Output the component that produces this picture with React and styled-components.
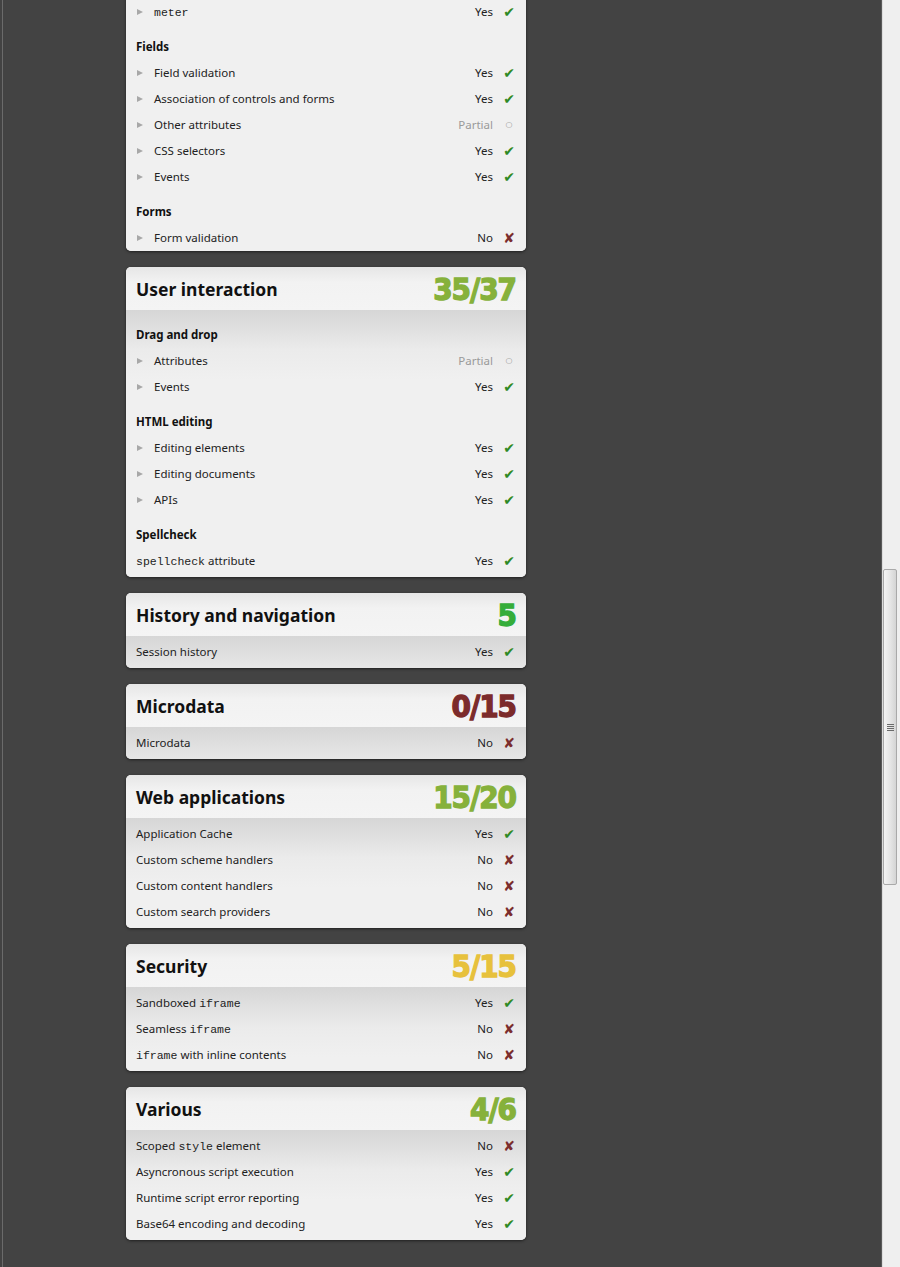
import React from 'react';
import styled, { createGlobalStyle } from 'styled-components';

const GlobalStyle = createGlobalStyle`
  html, body {
    margin: 0;
    padding: 0;
    height: 100%;
    overflow: hidden;
    background: #434343;
  }
  body {
    font-family: 'Noto Sans', 'Open Sans', Arial, sans-serif;
  }
`;

const Page = styled.div`
  display: flex;
  height: 100vh;
`;

const Main = styled.div`
  flex: 1;
  margin-left: 2px;
  border-left: 1px solid #6b6b6b;
  border-right: 1px solid #5a5a5a;
  padding-left: 123px;
  display: flex;
  flex-direction: column;
  gap: 16px;
  overflow: hidden;
`;

const ScrollTrack = styled.div`
  width: 18px;
  background: #efefef;
  border-left: 1px solid #dcdcdc;
  box-sizing: border-box;
  display: flex;
  flex-direction: column;
  padding-top: 569px;
`;

const ScrollThumb = styled.div`
  width: 14px;
  height: 316px;
  box-sizing: border-box;
  border: 1px solid #a9a9a9;
  border-radius: 2px;
  background: linear-gradient(to right, #f4f4f4, #e6e6e6 50%, #d4d4d4);
  display: flex;
  align-items: center;
  justify-content: center;
`;

const Grip = styled.div`
  width: 7px;
  height: 7px;
  background: repeating-linear-gradient(to bottom, #6a6a6a 0 1px, transparent 1px 2px);
`;

const Card = styled.section`
  width: 400px;
  background: #f0f0f0;
  border-radius: ${p => (p.$cut ? '0 0 5px 5px' : '5px')};
  box-shadow: 0 1px 3px rgba(0, 0, 0, 0.55);
  overflow: hidden;
  margin-top: ${p => (p.$cut ? '-4px' : '0')};
`;

const Header = styled.header`
  height: 43px;
  padding: 0 10px;
  display: flex;
  align-items: center;
  justify-content: space-between;
  background: linear-gradient(to bottom, #e6e6e6, #f2f2f2 35%, #f4f4f4);
`;

const Title = styled.h2`
  margin: 0;
  font-family: 'Noto Sans', 'Open Sans', sans-serif;
  font-weight: bold;
  font-size: 17.5px;
  color: #111;
`;

const Score = styled.div`
  font-family: 'DejaVu Sans Condensed', 'DejaVu Sans', sans-serif;
  font-weight: bold;
  font-size: 31px;
  letter-spacing: -1px;
  line-height: 1;
  color: ${p => p.$color};
  -webkit-text-stroke: 1.3px ${p => p.$color};
  padding-top: 2px;
`;

const Body = styled.div`
  padding: 3px 0 ${p => (p.$tight ? '0' : '3px')};
  background: ${p =>
    p.$cut ? '#f0f0f0' : 'linear-gradient(to bottom, #d6d6d6, #ebebeb 40px, #f0f0f0 70px)'};
`;

const GroupTitle = styled.h3`
  margin: 0;
  height: 35px;
  box-sizing: border-box;
  padding: 14px 10px 5px;
  font-size: 11.5px;
  line-height: 16px;
  font-weight: bold;
  color: #111;
`;

const Row = styled.div`
  height: 26px;
  box-sizing: border-box;
  padding: 0 10px 1px;
  display: flex;
  align-items: center;
  font-size: 11.5px;
  color: #222;
  ${p =>
    p.$more &&
    `
    &::before {
      content: '';
      width: 0;
      height: 0;
      border-left: 6px solid #a8a8a8;
      border-top: 3.5px solid transparent;
      border-bottom: 3.5px solid transparent;
      margin: 0 11px 0 1px;
    }
  `}
`;

const Code = styled.code`
  font-family: 'Liberation Mono', 'DejaVu Sans Mono', monospace;
  font-size: 11.5px;
`;

const Status = styled.span`
  margin-left: auto;
  color: ${p => (p.$kind === 'partial' ? '#9a9a9a' : '#222')};
`;

const Mark = styled.span`
  width: 14px;
  margin-left: 9px;
  text-align: center;
  font-family: 'DejaVu Sans', sans-serif;
  font-size: ${p => (p.$kind === 'partial' ? '8px' : '14px')};
  color: ${p =>
    p.$kind === 'yes' ? '#2f8a25' : p.$kind === 'no' ? '#7b2d2d' : '#9a9a9a'};
`;

const STATUS = {
  yes: { label: 'Yes', mark: '\u2714' },
  no: { label: 'No', mark: '\u2718' },
  partial: { label: 'Partial', mark: '\u25CB' },
};

const renderLabel = label =>
  Array.isArray(label)
    ? label.map((part, i) => (i % 2 ? <Code key={i}>{part}</Code> : <span key={i}>{part}</span>))
    : label;

const Item = ({ label, kind, more }) => (
  <Row $more={more}>
    <span>{renderLabel(label)}</span>
    <Status $kind={kind}>{STATUS[kind].label}</Status>
    <Mark $kind={kind}>{STATUS[kind].mark}</Mark>
  </Row>
);

const sections = [
  {
    title: 'User interaction',
    score: '35/37',
    color: '#86b13b',
    groups: [
      {
        name: 'Drag and drop',
        items: [
          { label: 'Attributes', kind: 'partial', more: true },
          { label: 'Events', kind: 'yes', more: true },
        ],
      },
      {
        name: 'HTML editing',
        items: [
          { label: 'Editing elements', kind: 'yes', more: true },
          { label: 'Editing documents', kind: 'yes', more: true },
          { label: 'APIs', kind: 'yes', more: true },
        ],
      },
      {
        name: 'Spellcheck',
        items: [{ label: ['', 'spellcheck', ' attribute'], kind: 'yes' }],
      },
    ],
  },
  {
    title: 'History and navigation',
    score: '5',
    color: '#35ad3a',
    items: [{ label: 'Session history', kind: 'yes' }],
  },
  {
    title: 'Microdata',
    score: '0/15',
    color: '#7c2b2b',
    items: [{ label: 'Microdata', kind: 'no' }],
  },
  {
    title: 'Web applications',
    score: '15/20',
    color: '#86b13b',
    items: [
      { label: 'Application Cache', kind: 'yes' },
      { label: 'Custom scheme handlers', kind: 'no' },
      { label: 'Custom content handlers', kind: 'no' },
      { label: 'Custom search providers', kind: 'no' },
    ],
  },
  {
    title: 'Security',
    score: '5/15',
    color: '#e7c13c',
    items: [
      { label: ['Sandboxed ', 'iframe'], kind: 'yes' },
      { label: ['Seamless ', 'iframe'], kind: 'no' },
      { label: ['', 'iframe', ' with inline contents'], kind: 'no' },
    ],
  },
  {
    title: 'Various',
    score: '4/6',
    color: '#86b13b',
    items: [
      { label: ['Scoped ', 'style', ' element'], kind: 'no' },
      { label: 'Asyncronous script execution', kind: 'yes' },
      { label: 'Runtime script error reporting', kind: 'yes' },
      { label: 'Base64 encoding and decoding', kind: 'yes' },
    ],
  },
];

const BodyContent = ({ section }) => (
  <>
    {section.items && section.items.map((it, i) => <Item key={i} {...it} />)}
    {section.groups &&
      section.groups.map(g => (
        <React.Fragment key={g.name}>
          <GroupTitle>{g.name}</GroupTitle>
          {g.items.map((it, i) => (
            <Item key={i} {...it} />
          ))}
        </React.Fragment>
      ))}
  </>
);

export default function App() {
  return (
    <Page>
      <GlobalStyle />
      <Main>
        <Card $cut>
          <Body $cut $tight>
            <Item label={['', 'meter']} kind="yes" more />
            <GroupTitle>Fields</GroupTitle>
            <Item label="Field validation" kind="yes" more />
            <Item label="Association of controls and forms" kind="yes" more />
            <Item label="Other attributes" kind="partial" more />
            <Item label="CSS selectors" kind="yes" more />
            <Item label="Events" kind="yes" more />
            <GroupTitle>Forms</GroupTitle>
            <Item label="Form validation" kind="no" more />
          </Body>
        </Card>
        {sections.map(s => (
          <Card key={s.title}>
            <Header>
              <Title>{s.title}</Title>
              <Score $color={s.color}>{s.score}</Score>
            </Header>
            <Body>
              <BodyContent section={s} />
            </Body>
          </Card>
        ))}
      </Main>
      <ScrollTrack>
        <ScrollThumb>
          <Grip />
        </ScrollThumb>
      </ScrollTrack>
    </Page>
  );
}
